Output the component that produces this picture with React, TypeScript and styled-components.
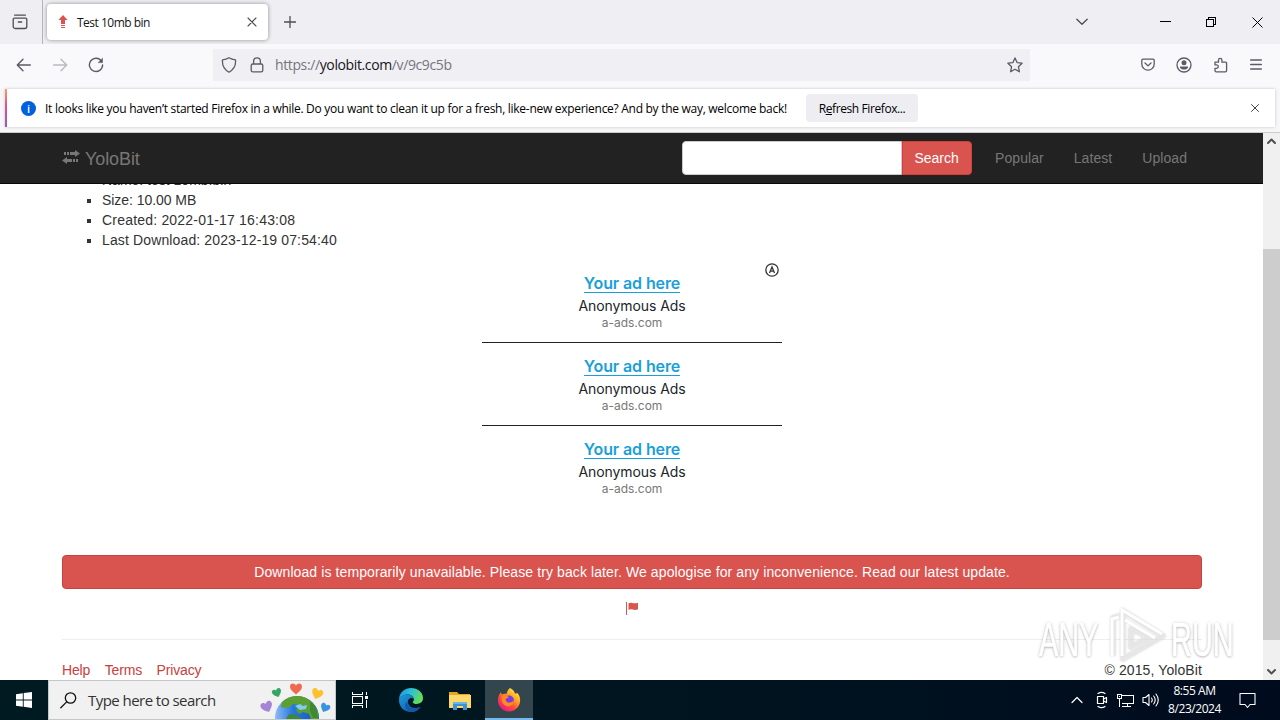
import type { ReactNode } from 'react';
import styled, { createGlobalStyle } from 'styled-components';

const ads = [1, 2, 3];
const files = [
  { text: 'Name: test 10mb.bin', spacing: 0 },
  { text: 'Size: 10.00 MB', spacing: -0.05 },
  { text: 'Created: 2022-01-17 16:43:08', spacing: 0.2 },
  { text: 'Last Download: 2023-12-19 07:54:40', spacing: 0.13 },
];

const Icon = ({ w = 16, h = w, sw = 1.3, children }
  : {
    w?: number
    h?: number
    sw?: number
    children: ReactNode
  }) => (
  <svg width={w} height={h} viewBox={`0 0 ${w} ${h}`} fill="none" stroke="currentColor" strokeWidth={sw} strokeLinecap="round" strokeLinejoin="round">
    {children}
  </svg>
)

const TabBar = () => (
  <TabStrip>
    <ViewButton>
      <Icon>
        <path d="M2.6 1.1h10.8M2.5 4.2h11a1.3 1.3 0 0 1 1.3 1.3v7a2 2 0 0 1-2 2H3.2a2 2 0 0 1-2-2v-7a1.3 1.3 0 0 1 1.3-1.3zM6.3 8h3.4" />
      </Icon>
    </ViewButton>
    <Tab>
      <svg width="10" height="14" viewBox="0 0 10 14" fill="#d9534f">
        <path d="M5 0l4.6 5H7v4H3V5H.4zM3 10h4v1H3zM3 12h4v1H3z" />
      </svg>
      <TabTitle>Test 10mb bin</TabTitle>
      <Icon w={10} sw={1.1}><path d="M1 1l8 8M9 1L1 9" /></Icon>
    </Tab>
    <NewTab>
      <Icon w={12} sw={1.3}><path d="M6 .5v11M.5 6h11" /></Icon>
    </NewTab>
    <WindowButtons>
      <Chevron><Icon w={12} h={8} sw={1.3}><path d="M.8 1.3L6 6.3l5.2-5" /></Icon></Chevron>
      <WindowButton>
        <svg width="11" height="11" shapeRendering="crispEdges"><path d="M0 4h11v1H0z" /></svg>
      </WindowButton>
      <WindowButton>
        <svg width="11" height="11" fill="none" stroke="#000" shapeRendering="crispEdges"><path d="M.5 2.5h7v7h-7zM2.5 2.5v-2h7v7h-2" /></svg>
      </WindowButton>
      <WindowButton>
        <svg width="11" height="11" fill="none" stroke="#000"><path d="M.5 .5l10 10M10.5 .5l-10 10" /></svg>
      </WindowButton>
    </WindowButtons>
  </TabStrip>
)

const AddressBar = () => (
  <Toolbar>
    <NavButtons>
      <Icon sw={1.4}><path d="M14.3 8H1.5M7 2.3L1.3 8 7 13.7" /></Icon>
      <Faded><Icon sw={1.4}><path d="M1.7 8h12.8M9 2.3L14.7 8 9 13.7" /></Icon></Faded>
      <Icon sw={1.4}>
        <path d="M13.6 4.4A6.6 6.6 0 1 0 14.6 8" />
        <path d="M14.5 1.6v4h-4z" fill="currentColor" strokeWidth=".6" />
      </Icon>
    </NavButtons>
    <UrlField>
      <Icon><path d="M8 .8c2 1.3 4.2 1.9 6.5 2.1.5 5-1.5 9.5-6.5 12.3C3 12.4 1 7.9 1.5 2.9 3.8 2.7 6 2.1 8 .8z" /></Icon>
      <Icon><path d="M3.8 7h8.4a1.6 1.6 0 0 1 1.6 1.6v4.6a1.6 1.6 0 0 1-1.6 1.6H3.8a1.6 1.6 0 0 1-1.6-1.6V8.6A1.6 1.6 0 0 1 3.8 7zM4.6 7V4.2a3.4 3.4 0 0 1 6.8 0V7" /></Icon>
      <Url>https://<b>yolobit.com</b>/v/9c9c5b</Url>
      <Icon><path d="M8 .9l2.1 4.7 5 .6-3.7 3.5 1 5.1L8 12.3l-4.4 2.5 1-5.1L.9 6.2l5-.6z" /></Icon>
    </UrlField>
    <ToolButtons>
      <Icon w={14}><path d="M2 1.2h10a1.2 1.2 0 0 1 1.2 1.2V6a6.2 6.2 0 0 1-12.4 0V2.4A1.2 1.2 0 0 1 2 1.2zM4 5l3 2.9L10 5" /></Icon>
      <Icon>
        <circle cx="8" cy="8" r="7" />
        <circle cx="8" cy="5.8" r="2.5" fill="currentColor" stroke="none" />
        <path d="M4 9.5h8v1.2C11 12 9.5 12.5 8 12.5S5 12 4 10.7z" fill="currentColor" stroke="none" />
      </Icon>
      <Icon>
        <path d="M2 5.2h3.5V3a1.7 1.7 0 0 1 3.4 0v2.2h3.5a1.2 1.2 0 0 1 1.2 1.2v7.2a1.2 1.2 0 0 1-1.2 1.2H3.2A1.2 1.2 0 0 1 2 13.6v-2.3h1.6a1.7 1.7 0 0 0 0-3.4H2z" />
      </Icon>
      <Icon w={12}><path d="M.6 1h10.8M.6 5.5h10.8M.6 10h10.8" /></Icon>
    </ToolButtons>
  </Toolbar>
)

const Notice = () => (
  <NoticeRow>
    <NoticeCard>
      <InfoMark>i</InfoMark>
      <NoticeText>It looks like you haven’t started Firefox in a while. Do you want to clean it up for a fresh, like-new experience? And by the way, welcome back!</NoticeText>
      <RefreshButton>R<u>e</u>fresh Firefox...</RefreshButton>
      <NoticeClose><Icon w={8} sw={1}><path d="M.5 .5l7 7M7.5 .5l-7 7" /></Icon></NoticeClose>
    </NoticeCard>
  </NoticeRow>
)

const Watermark = () => (
  <WatermarkBox>
    <MarkText>ANY</MarkText>
    <MarkArrow width="62" height="62" viewBox="0 0 62 62" fill="none">
      <path d="M8 50V12l7-2M18 5v48l40-23zM26 23v18l18-10z" stroke="#e4e4e4" strokeWidth="6" strokeLinejoin="round" opacity=".6" />
      <path d="M7 50V13l7-2M17 50V4l40 24M20 14l30 18" stroke="#fff" strokeWidth="3" />
    </MarkArrow>
    <MarkText>RUN</MarkText>
  </WatermarkBox>
)

const Page = () => (
  <Viewport>
    <Site>
      <Navbar>
        <NavInner>
          <Brand>
            <svg width="18" height="14" viewBox="0 0 18 14" fill="currentColor">
              <path d="M2 2h2v3H2zM5 2h2v3H5zM8 2h5V0l5 3.5L13 7V5H8zM16 9h-2v3h2zM13 9h-2v3h2zM10 9H5V7L0 10.5 5 14v-2h5z" />
            </svg>
            YoloBit
          </Brand>
          <SearchInput aria-label="Search files" />
          <SearchButton>Search</SearchButton>
          <NavLink>Popular</NavLink>
          <NavLink>Latest</NavLink>
          <NavLink>Upload</NavLink>
        </NavInner>
      </Navbar>
      <Container>
        <FileList>
          {files.map(({ text, spacing }) => <FileItem key={text} $spacing={spacing}>{text}</FileItem>)}
        </FileList>
        <AdBox>
          <AdBadge>
            <svg width="14" height="14" viewBox="0 0 14 14" fill="none" stroke="#333">
              <circle cx="7" cy="7" r="6.2" strokeWidth="1.3" />
              <path d="M4.5 10L7 4l2.5 6M5.5 8.2h3" strokeWidth="1.3" />
            </svg>
          </AdBadge>
          {ads.map((ad) => (
            <Ad key={ad}>
              <AdTitle>Your ad here</AdTitle>
              <AdName>Anonymous Ads</AdName>
              <AdHost>a-ads.com</AdHost>
            </Ad>
          ))}
        </AdBox>
        <Alert>Download is temporarily unavailable. Please try back later. We apologise for any inconvenience. Read our latest update.</Alert>
        <FlagRow>
          <svg width="12" height="13" viewBox="0 0 12 13" fill="#d9534f">
            <path d="M0 0h1v13H0zM2.5 1.5C5-.5 7 2.5 12 .8v6.500C8 9.500 5.500 6 2.500 8z" />
          </svg>
        </FlagRow>
        <Footer>
          <FooterLink>Help</FooterLink>
          <FooterLink>Terms</FooterLink>
          <FooterLink>Privacy</FooterLink>
          <Copyright>© 2015, YoloBit</Copyright>
        </Footer>
      </Container>
    </Site>
    <Scrollbar>
      <Icon w={9} h={6} sw={2}><path d="M1 5l3.5-3.5L8 5" /></Icon>
      <Thumb />
      <Icon w={9} h={6} sw={2}><path d="M1 1l3.5 3.5L8 1" /></Icon>
    </Scrollbar>
    <Watermark />
  </Viewport>
)

const Heart = ({ x, y, r, s = 1, fill }: { x: number, y: number, r: number, s?: number, fill: string }) => (
  <path transform={`translate(${x} ${y}) rotate(${r}) scale(${s})`} fill={fill} d="M0 5.5C-3 3-6 .5-6-2.200-6-6-1.500-6.500 0-3.300 1.500-6.500 6-6 6-2.200 6 .5 3 3 0 5.500z" />
)

const EarthArt = () => (
  <svg width="76" height="38" viewBox="0 0 76 38">
    <defs>
      <linearGradient id="sea" x1="0" x2="1">
        <stop offset="0" stopColor="#8dbbf8" />
        <stop offset=".4" stopColor="#2878dc" />
        <stop offset="1" stopColor="#1355b8" />
      </linearGradient>
    </defs>
    <circle cx="38" cy="37" r="22" fill="url(#sea)" />
    <path d="M23 21c4-4 9-6 15-6 8 0 15 5 18 10 3 5 4 9 3.500 13H52l-2-5-6-2-4 2-3-4 3-5-6-1-3 3-5 1-4-1z" fill="#5b9f32" />
    <path d="M27 38l3-5 7 1 6 4zM51 20l6 6 2 11h-5l-3-7z" fill="#3e8a34" />
    <path d="M36 25l5-2 3 2 4-1-1 4-6 1z" fill="#86c9f7" />
    <Heart x={37} y={8} r={0} s={1} fill="#ef6a50" />
    <Heart x={18} y={12} r={-20} s={0.78} fill="#35a565" />
    <Heart x={58} y={13} r={20} s={0.95} fill="#fbc12f" />
    <Heart x={8} y={26} r={-22} s={0.98} fill="#a585d6" />
    <Heart x={66} y={27} r={24} s={0.8} fill="#3794e2" />
  </svg>
)

const Taskbar = () => (
  <TaskRow>
    <StartButton>
      <svg width="16" height="16" fill="#fff"><path d="M0 2.3l6.8-1v6.2H0zM7.7 1.1L16 0v7.5H7.7zM0 8.5h6.8v6.2l-6.8-1zM7.7 8.5H16V16l-8.3-1.2z" /></svg>
    </StartButton>
    <TaskSearch>
      <Icon w={17} h={17}><circle cx="10.5" cy="6" r="5.2" /><path d="M6.7 9.9L.8 15.8" /></Icon>
      <TaskHint>Type here to search</TaskHint>
      <EarthArt />
    </TaskSearch>
    <TaskButton>
      <svg width="17" height="16" fill="none" stroke="#fff" shapeRendering="crispEdges">
        <path d="M.5 0v2.5h10V0M.5 16v-2.5h10V16M.5 4.5h10v7H.5zM14.5 0v3M14.5 8v8" />
        <path d="M13 4h3v3h-3z" fill="#fff" stroke="none" />
      </svg>
    </TaskButton>
    <Pinned>
      <TaskButton>
        <svg width="24" height="24" viewBox="0 0 24 24">
          <defs>
            <linearGradient id="edgeTop" x1="0" y1="0" x2="1" y2=".4">
              <stop offset="0" stopColor="#1b8fd8" />
              <stop offset=".5" stopColor="#2bc0d8" />
              <stop offset="1" stopColor="#62dc5c" />
            </linearGradient>
            <linearGradient id="edgeLow" x1="0" y1="0" x2="1" y2="1">
              <stop offset="0" stopColor="#1b9de2" />
              <stop offset="1" stopColor="#0f4fa0" />
            </linearGradient>
          </defs>
          <path d="M0 12C0 4 6 0 12 0c7 0 12 4.5 12 10 0 4-3 6-6.5 6-2.5 0-4-.9-4-1.8 0-.6 1.2-1.2 1.2-3C14.7 8.5 12 6.500 8.500 6.500 4 6.500 1 9 0 12z" fill="url(#edgeTop)" />
          <path d="M0 12C1 8.500 4.500 6.500 8.500 6.500c3.500 0 6.200 2 6.200 4.500-2-2.200-5.700-.8-5.700 3 0 4.500 5 7.500 12.500 5C19.500 22 16 24 12 24 5 24 0 19 0 12z" fill="url(#edgeLow)" />
          <path d="M9 13c-2 6 4 9.500 12.500 6-2 3-5.500 5-9.500 5C5 22 4.500 15.500 9 13z" fill="#1359a8" />
          <path d="M9.300 12.500c1-2 3.800-2.500 5.400-1.500 0 1.800-1.200 2.400-1.200 3.200 0 .9 1.500 1.800 4 1.800 2.500 0 4.500-.8 5.500-2-.5 2.500-2 4-4 4.800-5 1-10-1.500-9.700-6.300z" fill="#001821" />
        </svg>
      </TaskButton>
      <TaskButton>
        <svg width="22" height="19" viewBox="0 0 22 19">
          <path d="M0 1h8l2 2h11v4H0z" fill="#e8a624" />
          <path d="M0 4h22v13H0z" fill="#ffd86b" />
          <path d="M4 19v-8h14v8h-4v-4H8v4z" fill="#3a94d6" />
          <path d="M4 11h14v2H4z" fill="#66b7e8" />
        </svg>
      </TaskButton>
      <TaskButton $active>
        <svg width="24" height="24" viewBox="0 0 24 24">
          <defs>
            <linearGradient id="fox" x1=".85" y1=".05" x2=".2" y2=".95">
              <stop offset="0" stopColor="#fff04f" />
              <stop offset=".35" stopColor="#ffa51f" />
              <stop offset=".65" stopColor="#ff4a3c" />
              <stop offset="1" stopColor="#e5178b" />
            </linearGradient>
          </defs>
          <path d="M13 0c3 1.500 4.500 3.500 5 5.500 1 .3 1.700 0 2-.8C22.500 7 23.500 10 23 14c-.8 5.500-5.500 9.500-11 9.500S1.500 19.500 1 13.500C.8 9.500 2 6.500 4 4c0 1 .3 1.800.8 2.300C6 5.500 8.500 5.500 9.500 6c.5-2.500 1.500-4.500 3.500-6z" fill="url(#fox)" />
          <circle cx="12" cy="12.500" r="5" fill="#7a3be0" />
          <path d="M5 8c3-1 6 0 7 1.500-1.500.2-3 1-3.500 2C9 15 14 16 17 12c0 5-4 7-7.500 6C5.500 17 3.500 12 5 8z" fill="#ff8a22" />
        </svg>
      </TaskButton>
    </Pinned>
    <Tray>
      <Icon w={12} h={8} sw={1.2}><path d="M1 6.5l5-5 5 5" /></Icon>
      <Icon w={14} h={18} sw={1.2}><path d="M2.5 5.5h6v7h-6zM8.5 8l3-1.5v5l-3-1.5M3 2.5Q6.5 .3 10 2.5M3 15.5q3.5 2.2 7 0" /></Icon>
      <svg width="17" height="15" fill="none" stroke="#fff" shapeRendering="crispEdges"><path d="M5 2.5h11.5v8H5M.5 1.5h4v4h-4zM2.5 5.5v8M10.5 10.5v3M5 13.5h9M2 3.5h1" /></svg>
      <Icon w={17} h={16} sw={1.1}><path d="M1 5.5h2.5L7 2.5v11l-3.5-3H1zM9.5 6q1.5 2 0 4M11.7 4q3 4 0 8M14 2q4.5 6 0 12" /></Icon>
      <Clock>
        <span>8:55 AM</span>
        <span>8/23/2024</span>
      </Clock>
      <Icon w={17} h={17} sw={1.1}><path d="M1 1.5h15v11h-5L8.5 15.5 6 12.5H1z" /></Icon>
    </Tray>
  </TaskRow>
)

const App = () => (
  <Screen>
    <GlobalStyle />
    <TabBar />
    <AddressBar />
    <Notice />
    <Page />
    <Taskbar />
  </Screen>
)

export default App

const GlobalStyle = createGlobalStyle`
  * {
    box-sizing: border-box;
  }

  body {
    margin: 0;
  }

  svg {
    display: block;
    flex: none;
  }
`;

const Screen = styled.div`
  display: flex;
  flex-direction: column;
  width: 1280px;
  height: 720px;
  overflow: hidden;
  background: #fff;
  color: #000;
  font-family: "Open Sans", "Noto Sans", sans-serif;
  font-size: 12px;
  white-space: nowrap;
`;

const TabStrip = styled.div`
  display: flex;
  align-items: center;
  height: 44px;
  background: #eeeef3;
  color: #4d4d56;
`;

const ViewButton = styled.div`
  display: flex;
  align-items: center;
  width: 43px;
  height: 44px;
  padding-left: 12px;
  border-right: 1px solid #b4b4bb;
`;

const Tab = styled.div`
  display: flex;
  align-items: center;
  width: 221px;
  height: 36px;
  margin-left: 4px;
  padding: 0 11px;
  border-radius: 4px;
  background: #fff;
  box-shadow: 0 0 4px rgba(0, 0, 0, 0.4);
`;

const TabTitle = styled.span`
  flex: 1;
  margin-left: 9px;
  color: #15141a;
  letter-spacing: -0.5px;
`;

const NewTab = styled.div`
  margin-left: 16px;
`;

const WindowButtons = styled.div`
  display: flex;
  align-items: center;
  margin-left: auto;
`;

const Chevron = styled.div`
  margin-right: 54px;
`;

const WindowButton = styled.div`
  display: flex;
  justify-content: center;
  width: 46px;
`;

const Toolbar = styled.div`
  display: flex;
  align-items: center;
  height: 44px;
  padding: 0 18px 3px 16px;
  background: #f9f9fb;
  color: #5b5b66;
`;

const NavButtons = styled.div`
  display: flex;
  gap: 20px;
  width: 197px;
`;

const Faded = styled.div`
  opacity: 0.4;
`;

const UrlField = styled.div`
  display: flex;
  align-items: center;
  gap: 12px;
  width: 817px;
  height: 32px;
  padding: 0 7px 0 8px;
  background: #f0f0f4;
`;

const Url = styled.span`
  flex: 1;
  margin-left: -2px;
  color: #75757e;
  font-size: 14px;
  letter-spacing: -0.38px;

  b {
    color: #15141a;
    font-weight: 400;
  }
`;

const ToolButtons = styled.div`
  display: flex;
  align-items: center;
  gap: 21px;
  margin-left: auto;
`;

const NoticeRow = styled.div`
  height: 45px;
  padding: 1px 5px 0;
  background: #f7f7f9;
  border-bottom: 1px solid #ccc;
`;

const NoticeCard = styled.div`
  display: flex;
  align-items: center;
  height: 38px;
  padding: 0 16px 0 14px;
  border-left: 2px solid;
  border-image: linear-gradient(#f5a35c, #d65391 45%, #9059c8) 1;
  background: #fff;
  box-shadow: 0 0 3px rgba(0, 0, 0, 0.2);
`;

const InfoMark = styled.span`
  width: 15px;
  height: 15px;
  border-radius: 50%;
  background: #0060df;
  color: #fff;
  font-size: 11px;
  font-weight: 600;
  line-height: 15px;
  text-align: center;
`;

const NoticeText = styled.span`
  width: 761px;
  margin-left: 9px;
  letter-spacing: -0.283px;
`;

const RefreshButton = styled.span`
  width: 112px;
  height: 28px;
  border-radius: 4px;
  background: #eeeef2;
  line-height: 29px;
  text-align: center;
  letter-spacing: -0.4px;
`;

const NoticeClose = styled.div`
  margin-left: auto;
  color: #444;
`;

const Viewport = styled.div`
  position: relative;
  display: flex;
  height: 547px;
  overflow: hidden;
`;

const Site = styled.main`
  width: 1263px;
  color: #333;
  font-family: "Liberation Sans", Arial, sans-serif;
  font-size: 14px;
  line-height: 20px;
`;

const Navbar = styled.nav`
  position: absolute;
  top: 0;
  left: 0;
  z-index: 2;
  width: 1263px;
  height: 51px;
  background: #222;
  border-bottom: 1px solid #080808;
  color: #777;
`;

const NavInner = styled.div`
  display: flex;
  align-items: center;
  height: 50px;
  padding: 0 61px 0 62px;
`;

const Brand = styled.div`
  display: flex;
  align-items: center;
  gap: 5px;
  margin-right: auto;
  padding-top: 2px;
  font-size: 18px;
  letter-spacing: -0.1px;

  svg {
    margin-top: -4px;
  }
`;

const SearchInput = styled.input`
  width: 220px;
  height: 34px;
  padding: 6px 12px;
  border: 1px solid #ccc;
  border-radius: 4px 0 0 4px;
  background: #fff;
`;

const SearchButton = styled.span`
  width: 70px;
  height: 34px;
  margin-right: 8px;
  padding-right: 1px;
  border: 1px solid #d43f3a;
  border-radius: 0 4px 4px 0;
  background: #d9534f;
  color: #fff;
  line-height: 32px;
  text-align: center;
`;

const NavLink = styled.span`
  padding: 0 15px;
  letter-spacing: 0.06px;
`;

const Container = styled.div`
  width: 1140px;
  margin-left: 62px;
  padding-top: 37px;
`;

const FileList = styled.ul`
  margin: 0;
  padding-left: 40px;
  list-style: square;
`;

const FileItem = styled.li<{ $spacing: number }>`
  letter-spacing: ${({ $spacing }) => $spacing}px;
`;

const AdBox = styled.div`
  position: relative;
  width: 300px;
  height: 250px;
  margin: 9px auto 46px;
  color: #212529;
  font-family: Inter, Roboto, sans-serif;
  text-align: center;
`;

const AdBadge = styled.div`
  position: absolute;
  top: 4px;
  right: 3px;
`;

const Ad = styled.div`
  display: flex;
  flex-direction: column;
  align-items: center;
  height: 83px;
  padding-top: 14px;

  & + & {
    padding-top: 13px;
    border-top: 1px solid #222;
  }
`;

const AdTitle = styled.div`
  height: 20px;
  border-bottom: 1px solid #1a9fda;
  color: #1a9fda;
  font-size: 16px;
  font-weight: 600;
  letter-spacing: -0.1px;
`;

const AdName = styled.div`
  margin-top: 3px;
  font-size: 14px;
  letter-spacing: -0.08px;
`;

const AdHost = styled.div`
  margin-top: -1px;
  color: #777;
  font-size: 12px;
  line-height: 16px;
`;

const Alert = styled.div`
  height: 34px;
  border: 1px solid #c2433f;
  border-radius: 4px;
  background: #d9534f;
  color: #fff;
  line-height: 32px;
  text-align: center;
  letter-spacing: 0.1px;
`;

const FlagRow = styled.div`
  display: flex;
  justify-content: center;
  height: 51px;
  padding-top: 13px;
  border-bottom: 1px solid #eee;
`;

const Footer = styled.footer`
  display: flex;
  gap: 14.5px;
  padding-top: 20px;
`;

const FooterLink = styled.a`
  color: #c9403c;
  letter-spacing: -0.15px;
`;

const Copyright = styled.span`
  margin-left: auto;
  letter-spacing: 0.1px;
`;

const Scrollbar = styled.div`
  display: flex;
  flex-direction: column;
  align-items: center;
  justify-content: space-between;
  width: 17px;
  padding: 5px 0;
  background: #f0f0f0;
  color: #505050;
`;

const Thumb = styled.div`
  width: 17px;
  height: 391px;
  margin: 76px 0 0;
  background: #cdcdcd;
`;

const WatermarkBox = styled.div`
  position: absolute;
  right: 45px;
  bottom: 12px;
  z-index: 1;
  display: flex;
  align-items: center;
  width: 196px;
  height: 62px;
`;

const MarkArrow = styled.svg`
  margin-right: 4px;
  filter: drop-shadow(0 0 1px rgba(0, 0, 0, 0.15));
`;

const MarkText = styled.span`
  width: 66px;
  height: 36px;
  margin-top: 3px;
  color: #fff;
  font-family: "Liberation Sans", sans-serif;
  font-size: 49px;
  line-height: 36px;
  text-shadow: 0 1px 3px rgba(0, 0, 0, 0.28), 0 0 5px rgba(0, 0, 0, 0.18);
  -webkit-text-stroke: 0.7px #fff;
  transform: scaleX(0.59);
  transform-origin: left;
`;

const TaskRow = styled.div`
  display: flex;
  align-items: center;
  height: 40px;
  background: linear-gradient(90deg, #001a22, #00151f 50%, #000b1e);
  color: #fff;
`;

const StartButton = styled.div`
  display: flex;
  justify-content: center;
  width: 48px;
`;

const TaskSearch = styled.div`
  display: flex;
  align-items: center;
  width: 288px;
  height: 40px;
  padding: 0 0 0 11px;
  border: 1px solid #c4c6c8;
  background: #f1f1f1;
  color: #111;
`;

const TaskHint = styled.span`
  flex: 1;
  margin-left: 11px;
  color: #333;
  font-size: 15px;
  letter-spacing: -0.55px;
`;

const Pinned = styled.div`
  display: flex;
  gap: 1px;
  margin-left: 3px;
`;

const TaskButton = styled.div<{ $active?: boolean }>`
  display: flex;
  align-items: center;
  justify-content: center;
  width: 48px;
  height: 40px;
  padding-top: ${({ $active }) => ($active ? 2 : 0)}px;
  background: ${({ $active }) => ($active ? '#33464e' : 'transparent')};
  border-bottom: ${({ $active }) => ($active ? '2px solid #76b9ed' : 'none')};
`;

const Tray = styled.div`
  display: flex;
  align-items: center;
  gap: 8px;
  margin-left: auto;
  padding-right: 24px;

  > svg:first-child {
    margin-right: 4px;
  }
`;

const Clock = styled.div`
  display: flex;
  flex-direction: column;
  align-items: center;
  width: 55px;
  margin: 0 9px 0 0;
  line-height: 18px;
  letter-spacing: -0.45px;
`;
